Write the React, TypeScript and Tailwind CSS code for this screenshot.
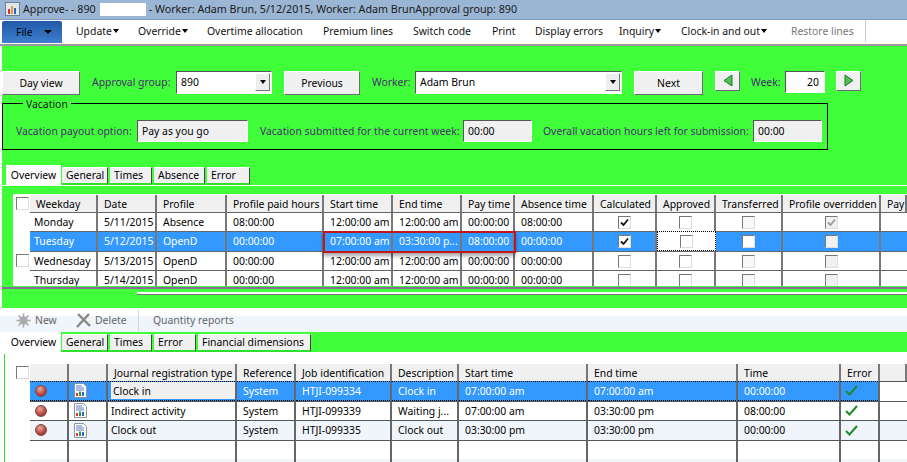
const topCols = "grid grid-cols-[17px_68px_59px_70px_97px_69px_69px_53px_79px_63px_59px_67px_98px_26px]";
const lowCols = "grid grid-cols-[17px_39px_39px_129px_59px_96px_67px_129px_150px_103px_39px_27px]";

const topHead = ["Weekday", "Date", "Profile", "Profile paid hours", "Start time", "End time", "Pay time", "Absence time", "Calculated", "Approved", "Transferred", "Profile overridden", "Pay"];
const topRows = [
  { cells: ["Monday", "5/11/2015", "Absence", "08:00:00", "12:00:00 am", "12:00:00 am", "00:00:00", "08:00:00"], calc: true, over: true },
  { cells: ["Tuesday", "5/12/2015", "OpenD", "00:00:00", "07:00:00 am", "03:30:00 p...", "08:00:00", "00:00:00"], calc: true, over: false, sel: true },
  { cells: ["Wednesday", "5/13/2015", "OpenD", "00:00:00", "12:00:00 am", "12:00:00 am", "00:00:00", "00:00:00"], calc: false, over: false },
  { cells: ["Thursday", "5/14/2015", "OpenD", "00:00:00", "12:00:00 am", "12:00:00 am", "00:00:00", "00:00:00"], calc: false, over: false },
];

const lowHead = ["", "", "Journal registration type", "Reference", "Job identification", "Description", "Start time", "End time", "Time", "Error", ""];
const lowRows = [
  ["Clock in", "System", "HTJI-099334", "Clock in", "07:00:00 am", "07:00:00 am", "00:00:00"],
  ["Indirect activity", "System", "HTJI-099339", "Waiting j...", "07:00:00 am", "03:30:00 pm", "08:00:00"],
  ["Clock out", "System", "HTJI-099335", "Clock out", "03:30:00 pm", "03:30:00 pm", "00:00:00"],
];

function Box({ checked, dim, className = "bg-white" }: { checked?: boolean; dim?: boolean; className?: string }) {
  return (
    <span className={`flex h-[13px] w-[13px] items-center justify-center border border-t-[#777] border-l-[#777] border-r-[#ddd] border-b-[#ddd] ${className}`}>
      {checked && (
        <svg width="9" height="9" viewBox="0 0 9 9">
          <path d="M1 4.5 L3.5 7 L8 1.5" fill="none" stroke={dim ? "#999" : "#111"} strokeWidth="1.8" />
        </svg>
      )}
    </span>
  );
}

function Combo({ text, className }: { text: string; className: string }) {
  return (
    <div className={`flex h-[23px] items-center justify-between border border-t-[#555] border-l-[#555] border-r-white border-b-white bg-white pl-[4px] pr-[1px] text-black ${className}`}>
      <span>{text}</span>
      <span className="flex h-[18px] w-[15px] items-center justify-center border border-r-[#777] border-b-[#777] border-t-white border-l-white bg-[#eee]">
        <span className="h-0 w-0 border-x-[3px] border-t-[4px] border-x-transparent border-t-black" />
      </span>
    </div>
  );
}

function Btn({ text, className }: { text: string; className: string }) {
  return (
    <div className={`flex h-[24px] items-center justify-center border border-t-white border-l-white border-r-[#6b6b78] border-b-[#6b6b78] bg-[#f0f0f0] text-black ${className}`}>
      {text}
    </div>
  );
}

function ArrowBtn({ dir, className }: { dir: "l" | "r"; className: string }) {
  return (
    <div className={`flex h-[20px] w-[25px] items-center justify-center border border-t-white border-l-white border-r-[#6b6b78] border-b-[#6b6b78] bg-[#f0f0f0] ${className}`}>
      <svg width="10" height="13" viewBox="0 0 10 13">
        <path d={dir === "l" ? "M9 1 V12 L1 6.5 Z" : "M1 1 V12 L9 6.5 Z"} fill="#4fc04f" stroke="#1c7a2a" />
      </svg>
    </div>
  );
}

function ReadOnly({ text, className }: { text: string; className: string }) {
  return (
    <div className={`flex h-[22px] items-center border border-t-[#555] border-l-[#555] border-r-white border-b-white bg-[#f0f0f0] pl-[4px] text-black ${className}`}>
      {text}
    </div>
  );
}

function Tabs({ tabs, className }: { tabs: [string, number][]; className: string }) {
  return (
    <div className={`flex h-[20px] items-end ${className}`}>
      <div className="mr-[1px] flex h-[20px] w-[55px] items-center justify-center bg-white pt-[1px] text-black">Overview</div>
      {tabs.map(([t, w]) => (
        <div key={t} style={{ width: w }} className="mr-[2px] flex h-[18px] items-center whitespace-nowrap border-t border-t-white border-r border-r-[#444] border-b-2 border-b-[#2ee02e] bg-[#f0f0f0] pl-[4px] text-black">
          {t}
        </div>
      ))}
    </div>
  );
}

function HeadCell({ text }: { text: string }) {
  return (
    <div className="flex h-[17px] items-center overflow-hidden whitespace-nowrap border-r-2 border-r-[#777] bg-[#f0f0f0] pl-[6px] pt-[1px] text-black">
      {text}
    </div>
  );
}

function Ball() {
  return <span className="ml-[5px] block h-[12px] w-[12px] rounded-full border border-[#7a4a45] bg-[radial-gradient(circle_at_40%_30%,#eaa79e,#b8443a_60%,#7c2a24)]" />;
}

function ReportIcon() {
  return (
    <svg width="13" height="15" viewBox="0 0 13 15" className="ml-[5px]">
      <path d="M0.5 0.5 H9.5 L12.5 3.5 V14.5 H0.5 Z" fill="#fff" stroke="#8a94a3" />
      <path d="M2 3 H8 M2 5 H10 M2 7 H10" stroke="#5a7cc0" />
      <rect x="2" y="10" width="2" height="3" fill="#d33" />
      <rect x="5" y="8.5" width="2" height="4.5" fill="#2a9a3a" />
      <rect x="8" y="9" width="2" height="4" fill="#2f62c8" />
    </svg>
  );
}

function GreenCheck() {
  return (
    <svg width="13" height="11" viewBox="0 0 13 11" className="ml-[4px]">
      <path d="M1 6 L4.5 9.5 L12 1" fill="none" stroke="#1f8a2a" strokeWidth="2" />
    </svg>
  );
}

export default function App() {
  return (
    <div className="flex h-[462px] w-[907px] flex-col overflow-hidden bg-white font-['Noto_Sans',sans-serif] text-[10.4px] leading-none">
      {/* title bar */}
      <div className="flex h-[20px] items-center whitespace-pre border-b border-b-[#7f9cbd] bg-[#9bb6d4] pl-[5px] text-[10.7px] text-[#1a1a1a]">
        <svg width="15" height="14" viewBox="0 0 15 14" className="mr-[3px]">
          <rect x="0.5" y="0.5" width="14" height="13" fill="#dfe6ef" stroke="#6f7f95" />
          <rect x="3" y="7" width="2" height="5" fill="#d33" />
          <rect x="6" y="4" width="2" height="8" fill="#e8a020" />
          <rect x="9" y="6" width="2" height="6" fill="#2a62c8" />
        </svg>
        <span className="w-[77px]">Approve- - 890 </span>
        <span className="h-[13px] w-[46px] bg-white" />
        <span> - Worker: Adam Brun, 5/12/2015, Worker: Adam BrunApproval group: 890</span>
      </div>

      {/* ribbon */}
      <div className="flex h-[26px] items-stretch border-b-2 border-b-[#9a9a9a] bg-white pl-[2px] text-[#111]">
        <div className="mt-[1px] flex h-[22px] w-[60px] items-center justify-between rounded-t-[2px] bg-gradient-to-b from-[#1f5aa8] to-[#3f7fce] pl-[14px] pr-[10px] text-black">
          File
          <span className="h-0 w-0 border-x-[4px] border-t-[4px] border-x-transparent border-t-black" />
        </div>
        <div className="ml-[14px] flex items-center whitespace-nowrap pb-[2px]">
          {[["Update", 62, 1], ["Override", 69, 1], ["Overtime allocation", 116, 0], ["Premium lines", 90, 0], ["Switch code", 79, 0], ["Print", 43, 0], ["Display errors", 84, 0], ["Inquiry", 62, 1], ["Clock-in and out", 110, 1]].map(([t, w, m]) => (
            <div key={t as string} style={{ width: w as number }} className="flex items-center gap-[1px]">
              {t}
              {m === 1 && <span className="h-0 w-0 border-x-[3px] border-t-[4px] border-x-transparent border-t-black" />}
            </div>
          ))}
          <div className="w-[74px] text-[#777]">Restore lines</div>
          <div className="h-[22px] w-px bg-[#ccc]" />
        </div>
      </div>

      {/* form area */}
      <div className="h-[263px] border-l-2 border-l-white bg-[#40ff3a] pt-[25px] text-[#4a2d6e]">
        <div className="flex items-start">
          <Btn text="Day view" className="w-[78px]" />
          <span className="ml-[12px] mr-[4px] mt-[6px] w-[80px] whitespace-nowrap">Approval group:</span>
          <Combo text="890" className="w-[96px]" />
          <Btn text="Previous" className="ml-[12px] w-[76px]" />
          <span className="ml-[12px] mt-[6px] w-[43px]">Worker:</span>
          <Combo text="Adam Brun" className="w-[207px]" />
          <Btn text="Next" className="ml-[12px] w-[69px]" />
          <ArrowBtn dir="l" className="ml-[12px]" />
          <span className="ml-[11px] mr-[3px] mt-[6px] w-[31px]">Week:</span>
          <div className="flex h-[22px] w-[40px] items-center justify-end border border-t-[#555] border-l-[#555] border-r-white border-b-white bg-white pr-[5px] text-black">20</div>
          <ArrowBtn dir="r" className="ml-[11px]" />
        </div>

        <fieldset className="mt-[2px] h-[53px] w-[826px] border border-black pl-[13px]">
          <legend className="ml-[7px] px-[3px] leading-[14px] text-[#222]">Vacation</legend>
          <div className="mt-[9px] flex items-center whitespace-nowrap">
            <span className="w-[121px]">Vacation payout option:</span>
            <ReadOnly text="Pay as you go" className="w-[111px]" />
            <span className="ml-[12px] w-[203px]">Vacation submitted for the current week:</span>
            <ReadOnly text="00:00" className="w-[69px]" />
            <span className="ml-[11px] w-[210px]">Overall vacation hours left for submission:</span>
            <ReadOnly text="00:00" className="w-[69px]" />
          </div>
        </fieldset>

        <div className="mt-[15px]">
          <Tabs tabs={[["General", 46], ["Times", 42], ["Absence", 51], ["Error", 43]]} className="pl-[4px]" />
          <div className="h-px bg-white" />
        </div>

        {/* upper grid */}
        <div className="relative ml-[11px] mt-[8px] h-[92px] overflow-hidden border-t border-t-white bg-white">
          <div className={topCols}>
            <div className="row-span-5 flex h-[92px] flex-col gap-[44px] bg-white pl-[3px] pt-[2px]">
              <Box />
              <Box />
            </div>
            {topHead.map((h, i) => (
              <HeadCell key={i} text={h} />
            ))}
            {topRows.map((r) => {
              const bg = r.sel ? "bg-[#3399ff] text-white" : "bg-white text-black";
              return [
                ...r.cells.map((c, i) => (
                  <div key={r.cells[0] + i} className={`flex h-[19.5px] items-center overflow-hidden whitespace-nowrap border-t border-t-[#666] border-r-2 border-r-[#777] ${i === 0 ? "pl-[4px]" : "pl-[6px]"} ${bg}`}>
                    {c}
                  </div>
                )),
                <div key={r.cells[0] + "c"} className={`flex h-[19.5px] items-center justify-center border-t border-t-[#666] border-r-2 border-r-[#777] ${bg}`}>
                  <Box checked={r.calc} />
                </div>,
                <div key={r.cells[0] + "a"} className={`flex h-[19.5px] items-center justify-center bg-white ${r.sel ? "border border-dotted border-black" : "border-t border-t-[#666] border-r-2 border-r-[#777]"}`}>
                  <Box />
                </div>,
                <div key={r.cells[0] + "t"} className={`flex h-[19.5px] items-center justify-center border-t border-t-[#666] border-r-2 border-r-[#777] ${bg}`}>
                  <Box className={r.sel ? "bg-white" : "bg-[#f8f8f8]"} />
                </div>,
                <div key={r.cells[0] + "o"} className={`flex h-[19.5px] items-center justify-center border-t border-t-[#666] border-r-2 border-r-[#777] ${bg}`}>
                  <Box checked={r.over} dim className="bg-[#f0f0f0]" />
                </div>,
                <div key={r.cells[0] + "p"} className={`h-[19.5px] border-t border-t-[#666] ${bg}`} />,
              ];
            })}
          </div>
          {/* red highlight over the edited times */}
          <div className="absolute left-[310px] top-[36px] h-[22px] w-[193px] border-2 border-[#c01818] shadow-[0_3px_4px_rgba(0,0,0,0.35)]" />
        </div>

        <div className="mt-[1px] h-[2px] bg-[#8a6a9a]" />
        <div className="ml-[135px] mt-[3px] h-[3px] border-b border-b-[#777] bg-white" />
      </div>

      {/* lower toolbar */}
      <div className="flex h-[24px] items-center whitespace-nowrap bg-[linear-gradient(#fff_8px,#f0f4fb_8px)] pl-[16px] text-[#666]">
        <svg width="15" height="15" viewBox="0 0 15 15" className="mr-[4px]">
          <circle cx="7.5" cy="7.5" r="4" fill="#aaa" />
          <path d="M7.5 0.5V14.5M0.5 7.5H14.5M2.5 2.5L12.5 12.5M12.5 2.5L2.5 12.5" stroke="#aaa" strokeWidth="1.6" />
        </svg>
        <span className="w-[41px]">New</span>
        <svg width="15" height="15" viewBox="0 0 15 15" className="mr-[4px]">
          <path d="M1 14 L13 1 M2 1 L14 13" stroke="#888" strokeWidth="2.4" />
        </svg>
        <span className="w-[43px]">Delete</span>
        <span className="h-[21px] w-px bg-[#d5d5d5]" />
        <span className="ml-[14px]">Quantity reports</span>
      </div>

      {/* lower tabs */}
      <div className="bg-[linear-gradient(to_right,#fff_6px,#40ff3a_6px)]">
        <Tabs tabs={[["General", 46], ["Times", 42], ["Error", 42], ["Financial dimensions", 113]]} className="pl-[6px]" />
      </div>

      {/* lower grid */}
      <div className="flex-1 bg-white pt-[2px]">
        <div className="flex h-full">
          <div className="ml-[4px] w-px bg-[#2ee02e]" />
          <div className="ml-[8px] flex-1 pt-[10px]">
            <div className={lowCols}>
              <div className="row-span-6 pl-[3px] pt-[2px]">
                <Box />
              </div>
              {lowHead.map((h, i) => (
                <HeadCell key={i} text={h} />
              ))}
              {lowRows.map((r, idx) => {
                const sel = idx === 0;
                const bg = sel ? "bg-[#3399ff] text-white" : idx === 2 ? "bg-[#f0f4fb] text-black" : "bg-white text-black";
                const cell = `flex h-[19.5px] items-center overflow-hidden whitespace-nowrap border-t border-r-2 border-r-[#666] ${sel ? "border-t-black border-b border-b-black [border-top-style:dotted] [border-bottom-style:dotted]" : "border-t-[#555]"} ${bg}`;
                return [
                  <div key={idx + "b"} className={cell}><Ball /></div>,
                  <div key={idx + "i"} className={cell}><ReportIcon /></div>,
                  ...r.map((c, i) => (
                    <div key={idx + "-" + i} className={`${cell} ${i === 0 ? "pl-[3px]" : "pl-[6px]"}`}>
                      {i === 0 && sel ? (
                        <span className="flex h-[17px] w-full items-center bg-[#f0f0f0] pl-[2px] text-black">{c}</span>
                      ) : (
                        c
                      )}
                    </div>
                  )),
                  <div key={idx + "e"} className={cell}><GreenCheck /></div>,
                  <div key={idx + "x"} className={`h-[19.5px] border-t border-t-[#555] ${idx === 2 ? "bg-[#f0f4fb]" : "bg-white"}`} />,
                ];
              })}
              {Array.from({ length: 11 }).map((_, i) => (
                <div key={i} className={`h-[19.5px] border-t border-t-[#555] ${i < 10 ? "border-r-2 border-r-[#666]" : ""}`} />
              ))}
              {Array.from({ length: 11 }).map((_, i) => (
                <div key={i} className={`h-[3px] bg-[#f0f4fb] ${i < 10 ? "border-r-2 border-r-[#666]" : ""}`} />
              ))}
            </div>
          </div>
        </div>
      </div>
    </div>
  );
}
